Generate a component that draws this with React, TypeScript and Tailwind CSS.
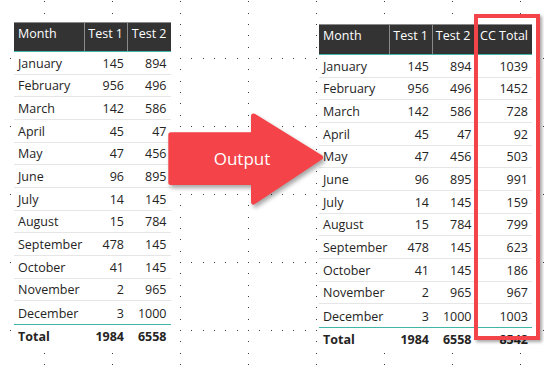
import React from "react";

const data: [string, number, number][] = [
  ["January", 145, 894],
  ["February", 956, 496],
  ["March", 142, 586],
  ["April", 45, 47],
  ["May", 47, 456],
  ["June", 96, 895],
  ["July", 14, 145],
  ["August", 15, 784],
  ["September", 478, 145],
  ["October", 41, 145],
  ["November", 2, 965],
  ["December", 3, 1000],
];

const font = { fontFamily: '"Open Sans", "Noto Sans", sans-serif' };

function DotGrid() {
  return (
    <svg className="absolute inset-0" width="544" height="365">
      <defs>
        <pattern id="dots" x="44" y="58" width="68" height="68" patternUnits="userSpaceOnUse">
          {[0, 11, 23, 34, 45, 57].map((y) => (
            <rect key={"v" + y} x="0" y={y} width="1" height="1" fill="#3a3a3a" />
          ))}
          {[11, 23, 34, 45, 57].map((x) => (
            <rect key={"h" + x} x={x} y="0" width="1" height="1" fill="#3a3a3a" />
          ))}
        </pattern>
      </defs>
      <rect width="544" height="365" fill="url(#dots)" />
    </svg>
  );
}

function Table({ withTotal, headerH, topGap }: { withTotal: boolean; headerH: string; topGap: string }) {
  const t1 = data.reduce((s, r) => s + r[1], 0);
  const t2 = data.reduce((s, r) => s + r[2], 0);
  return (
    <div className={`relative bg-white ${topGap} text-[12.5px] leading-[16px] text-[#252423]`} style={font}>
      <div className={`flex ${headerH} bg-[#333333] border-t border-[#8a8a8a] border-b border-b-[#41b6a8] text-white`}>
        <div className="w-[71px] pl-[4px] pt-[3px] border-r border-[#8a8a8a]">Month</div>
        <div className="w-[43px] pr-[4px] pt-[3px] text-right border-r border-[#8a8a8a]">Test 1</div>
        <div className={`w-[42.5px] pr-[4px] pt-[3px] text-right ${withTotal ? "border-r border-[#8a8a8a]" : ""}`}>Test 2</div>
        {withTotal && <div className="w-[56.5px] pr-[4px] pt-[3px] text-right">CC Total</div>}
      </div>
      {data.map(([m, a, b], i) => (
        <div key={m} className={`flex h-[22.67px] items-center pt-[2px] ${i < data.length - 1 ? "border-b border-[#e6e6e6]" : ""}`}>
          <div className="w-[71px] pl-[4px]">{m}</div>
          <div className="w-[43px] pr-[4px] text-right">{a}</div>
          <div className="w-[42.5px] pr-[4px] text-right">{b}</div>
          {withTotal && <div className="w-[56.5px] pr-[4px] text-right">{a + b}</div>}
        </div>
      ))}
      <div className="flex h-[24px] items-center pt-[1px] border-t border-[#41b6a8] font-bold">
        <div className="w-[71px] pl-[4px]">Total</div>
        <div className="w-[43px] pr-[4px] text-right">{t1}</div>
        <div className="w-[42.5px] pr-[4px] text-right">{t2}</div>
        {withTotal && <div className="w-[56.5px] pr-[4px] text-right">{t1 + t2}</div>}
      </div>
    </div>
  );
}

export default function App() {
  return (
    <div className="relative w-[544px] h-[365px] bg-white overflow-hidden">
      <DotGrid />
      <div className="relative flex items-start pl-[14px]">
        <Table withTotal={false} headerH="h-[30px]" topGap="mt-[22px]" />
        <div className="ml-[148.5px]">
          <Table withTotal={true} headerH="h-[31px]" topGap="mt-[24px]" />
        </div>
      </div>

      {/* Arrow */}
      <div className="absolute left-[160px] top-[100px] w-[180px] h-[120px]">
        <svg
          className="absolute inset-0 drop-shadow-[2px_3px_2px_rgba(0,0,0,0.35)]"
          width="180"
          height="120"
          viewBox="0 0 180 120"
        >
          <polygon
            points="10.8,34.8 93.5,34.8 93.5,16 160.5,57.5 93.5,102 93.5,82.5 10.8,82.5"
            fill="#f44449"
            stroke="#f44449"
            strokeWidth="5"
            strokeLinejoin="round"
          />
        </svg>
        <div
          className="absolute left-[52px] top-[47px] w-[60px] text-center text-[17px] leading-[24px] text-white"
          style={font}
        >
          Output
        </div>
      </div>

      {/* Highlight box */}
      <div className="absolute left-[474px] top-[14px] w-[66px] h-[326px] border-[4.5px] border-[#f3444a] shadow-[2px_2px_3px_rgba(0,0,0,0.35)]" />
    </div>
  );
}
